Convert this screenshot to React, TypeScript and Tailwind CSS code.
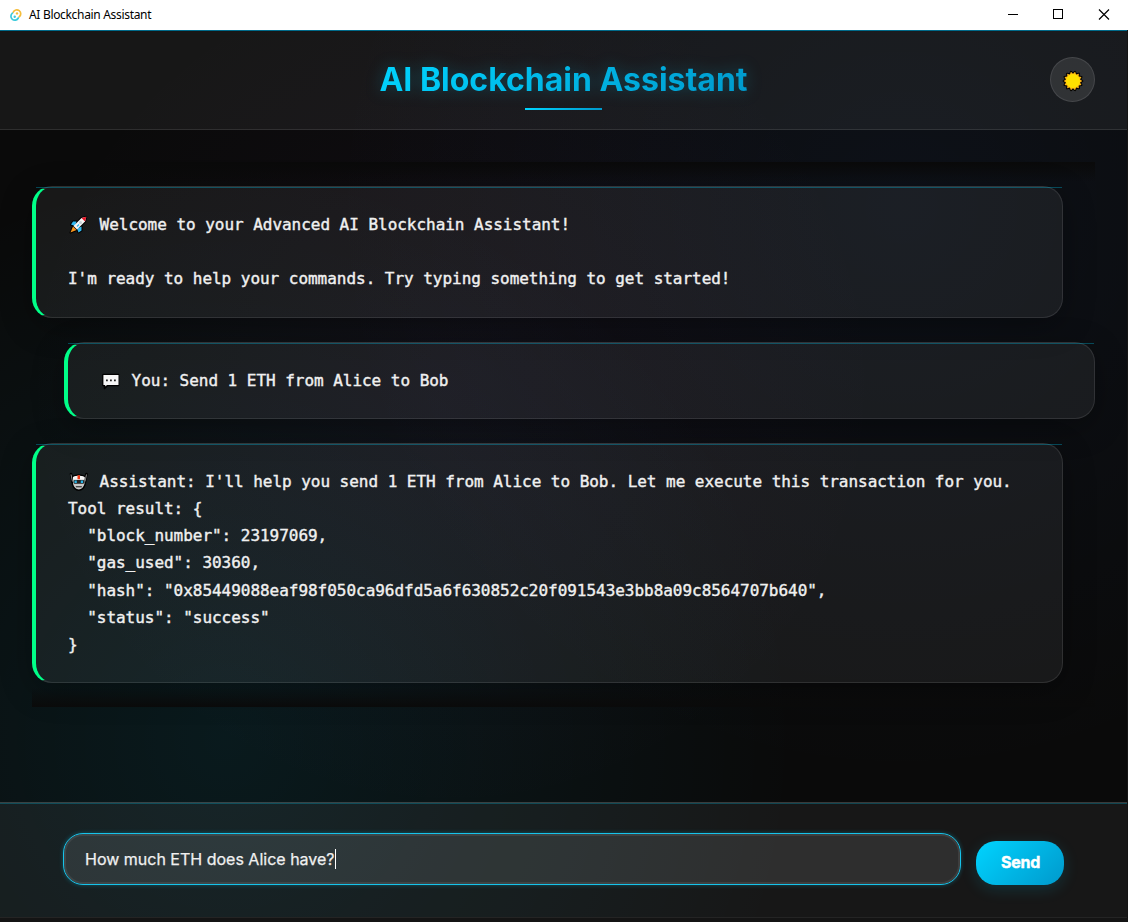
import type { ReactNode } from "react";

const MONO = "font-['DejaVu_Sans_Mono',monospace]";

function AppIcon() {
  return (
    <svg width="14" height="14" viewBox="0 0 14 14" fill="none">
      <path d="M4.2 4.3A3.9 3.9 0 1 1 10.2 8.8" stroke="#f5bd3b" strokeWidth="1.7" strokeLinecap="round" />
      <path d="M9.3 10A3.9 3.9 0 1 1 3.4 5.2" stroke="#3ccadb" strokeWidth="1.7" strokeLinecap="round" />
      <circle cx="8" cy="5.4" r="1.2" fill="#f5bd3b" />
      <circle cx="5.7" cy="8.7" r="1.2" fill="#3ccadb" />
    </svg>
  );
}

const SUN_POINTS = Array.from({ length: 28 }, (_, i) => {
  const r = i % 2 ? 7.2 : 9.4;
  const a = (i * Math.PI) / 14 + Math.PI / 14;
  return `${(11 + r * Math.sin(a)).toFixed(2)},${(11 - r * Math.cos(a)).toFixed(2)}`;
}).join(" ");

function Sun() {
  return (
    <svg width="22" height="22" viewBox="0 0 22 22" className="mt-[2px]">
      <polygon points={SUN_POINTS} fill="#000" stroke="#000" strokeWidth="2" strokeLinejoin="round" />
      <polygon points={SUN_POINTS} fill="#fcb414" />
      <circle cx="11" cy="11" r="7" fill="#ffe100" />
    </svg>
  );
}

function Rocket() {
  return (
    <svg width="20" height="20" viewBox="0 0 20 20" className="inline-block">
      <g stroke="#000" strokeWidth="2" strokeLinejoin="round">
        <path d="M8.5 6.5H5L3 9.5l4 1.5zM13.5 11.5v4l-3 2-1.5-4z" fill="#31b8f0" />
        <path d="M4.5 12.5L2.5 17.5 7.5 15.5z" fill="#f7941d" />
        <path d="M18.3 1.7L13.5 3 5.5 11l3.5 3.5 8-8z" fill="#fff" />
      </g>
      <path d="M8.5 6.5H5L3 9.5l4 1.5zM13.5 11.5v4l-3 2-1.5-4z" fill="#31b8f0" />
      <path d="M5 11.5L2.5 17.5 8.5 15z" fill="#f7941d" />
      <path d="M18.3 1.7L13.5 3 5.5 11l3.5 3.5 8-8z" fill="#f6f6f6" />
      <path d="M18.3 1.7L13.5 3 17 6.5z" fill="#e81224" />
      <path d="M9 11.5l2-2" stroke="#31b8f0" strokeWidth="1.2" />
      <circle cx="12.5" cy="7.5" r="1.5" fill="#c4ccd2" />
    </svg>
  );
}

function Bubble() {
  return (
    <svg width="20" height="20" viewBox="0 0 20 20" className="inline-block">
      <path d="M3 3.5h15.5v11H7.5l-3 3v-3H3z" fill="#f6f6f6" stroke="#000" strokeWidth="1.6" strokeLinejoin="round" />
      <path d="M3.5 4h15v10h-15z" fill="#f6f6f6" />
      <path d="M6 8.5h1.8v1.8H6zM10 8.5h1.8v1.8H10zM14 8.5h1.8v1.8H14z" fill="#222" />
    </svg>
  );
}

function Robot() {
  return (
    <svg width="20" height="20" viewBox="0 0 20 20" className="inline-block">
      <path d="M3 2l1.5 8M18.5 2L17 10" stroke="#000" strokeWidth="2.6" strokeLinecap="round" />
      <path d="M4.3 4.5Q10.8 1.5 17.2 4.5V12Q15.5 18 10.8 18.3Q6 18 4.3 12z" fill="#c8c8c8" stroke="#000" strokeWidth="1.4" />
      <path d="M3 2.5l1.5 7M18.5 2.5L17 9.5" stroke="#8a8a8a" strokeWidth="1" />
      <path d="M5 5Q10.8 2.3 16.5 5v2.5H5z" fill="#f5f5f5" />
      <path d="M9.5 3.2h2.5v4H9.5z" fill="#f03a17" />
      <rect x="5.5" y="8" width="10.6" height="3.8" rx="1" fill="#222" />
      <path d="M6.5 8.6h2.3v2.5H6.5zM12.8 8.6h2.3v2.5h-2.3z" fill="#29b6e8" />
      <path d="M7.8 14h6v1.4h-6z" fill="#4a4a4a" />
    </svg>
  );
}

function Message({ children, className }: { children: ReactNode; className: string }) {
  return (
    <div
      className={`relative rounded-[20px] border border-l-4 border-white/10 border-l-[#00ff88] bg-white/[0.06] px-8 py-6 shadow-[0_8px_32px_rgba(0,0,0,0.3)] ${className}`}
    >
      <div className="absolute inset-x-0 top-0 h-px bg-[#00d4ff]/30" />
      <div
        className={`whitespace-pre text-[16px] leading-[27.2px] tracking-[-0.032px] text-[#f0f0f0] [-webkit-text-stroke:0.4px_#f0f0f0] ${MONO}`}
      >
        {children}
      </div>
    </div>
  );
}

function Emoji({ children }: { children: ReactNode }) {
  return <span className="mr-[2px] inline-flex h-[20px] w-[20px] items-center align-[-5px]">{children}</span>;
}

const TOOL_RESULT = `Tool result: {
  "block_number": 23197069,
  "gas_used": 30360,
  "hash": "0x85449088eaf98f050ca96dfd5a6f630852c20f091543e3bb8a09c8564707b640",
  "status": "success"
}`;

export default function App() {
  return (
    <div className="flex h-[922px] w-[1128px] flex-col overflow-hidden bg-[#141414] font-['Inter',sans-serif]">
      <div className="flex h-[30px] shrink-0 items-center bg-white pl-[9px] text-black">
        <AppIcon />
        <span className="ml-[6px] flex-1 font-['Noto_Sans',sans-serif] text-[12px] tracking-[-0.32px]">AI Blockchain Assistant</span>
        <svg width="120" height="30" viewBox="0 0 120 30" fill="none" stroke="#000" shapeRendering="crispEdges">
          <path d="M0 14.5h10M45.5 9.5h9v9h-9z" />
          <path d="M91 9.5l10 10M101 9.5l-10 10" strokeWidth="1.2" shapeRendering="auto" />
        </svg>
      </div>
      <div className="flex h-[888px] w-[1127px] flex-col border-b border-[#242424] bg-[#0a0a0a] bg-[radial-gradient(circle_at_20%_80%,rgba(0,212,255,0.08)_0%,transparent_50%),radial-gradient(circle_at_80%_20%,rgba(64,128,255,0.06)_0%,transparent_50%),radial-gradient(circle_at_40%_40%,rgba(160,80,200,0.05)_0%,transparent_50%)]">
        <header className="flex h-[100px] shrink-0 items-center border-b border-white/10 border-t border-t-[#006a8a] bg-white/[0.055] px-8">
          <div className="w-[45px]" />
          <div className="mt-[10px] flex flex-1 flex-col items-center">
            <h1 className="bg-linear-135 from-[#00d4ff] to-[#0099cc] bg-clip-text text-[32px] leading-[38px] font-bold text-transparent drop-shadow-[0_0_8px_rgba(0,212,255,0.25)]">
              AI Blockchain Assistant
            </h1>
            <div className="mt-[9px] h-[2px] w-[77px] bg-linear-90 from-[#00d4ff] to-[#0099cc]" />
          </div>
          <button className="mb-px flex h-[45px] w-[45px] items-center justify-center rounded-full border border-white/10 bg-white/10">
            <Sun />
          </button>
        </header>
        <main className="h-[672px] shrink-0 px-8 pt-8">
          <div className="relative flex flex-col gap-6 py-6">
            <div className="absolute inset-x-0 top-0 h-5 bg-linear-to-b from-[#0a0a0a] to-transparent" />
            <Message className="mr-8">
              <Emoji><Rocket /></Emoji>
              {" Welcome to your Advanced AI Blockchain Assistant!\n\nI'm ready to help your commands. Try typing something to get started!"}
            </Message>
            <Message className="ml-8">
              <Emoji><Bubble /></Emoji>
              {" You: Send 1 ETH from Alice to Bob"}
            </Message>
            <Message className="mr-8">
              <Emoji><Robot /></Emoji>
              {" Assistant: I'll help you send 1 ETH from Alice to Bob. Let me execute this transaction for you.\n" + TOOL_RESULT}
            </Message>
            <div className="absolute inset-x-0 bottom-0 h-5 bg-linear-to-t from-[#0a0a0a] to-transparent" />
          </div>
        </main>
        <footer className="flex flex-1 gap-[15px] border-t border-white/15 bg-white/[0.055] px-[63px] shadow-[inset_0_1px_0_rgba(0,212,255,0.25)]">
          <div className="mt-[30px] flex h-[52px] w-[898px] items-center rounded-[20px] border border-[#17c3ea] bg-white/10 px-[21px] shadow-[0_0_4px_rgba(0,212,255,0.3),inset_0_0_0_2px_rgba(255,255,255,0.08)]">
            <span className="text-[16px] text-[#f0f0f0] [-webkit-text-stroke:0.25px_#f0f0f0]">How much ETH does Alice have?</span>
            <span className="h-5 w-px bg-white" />
          </div>
          <button className="mt-[38px] h-[44px] w-[88px] rounded-[20px] bg-linear-135 from-[#00d4ff] to-[#0099cc] pb-[2px] pl-px text-[16px] font-bold tracking-[-0.3px] text-white shadow-[0_4px_16px_rgba(0,212,255,0.15)] [-webkit-text-stroke:0.4px_#fff]">
            Send
          </button>
        </footer>
      </div>
    </div>
  );
}
